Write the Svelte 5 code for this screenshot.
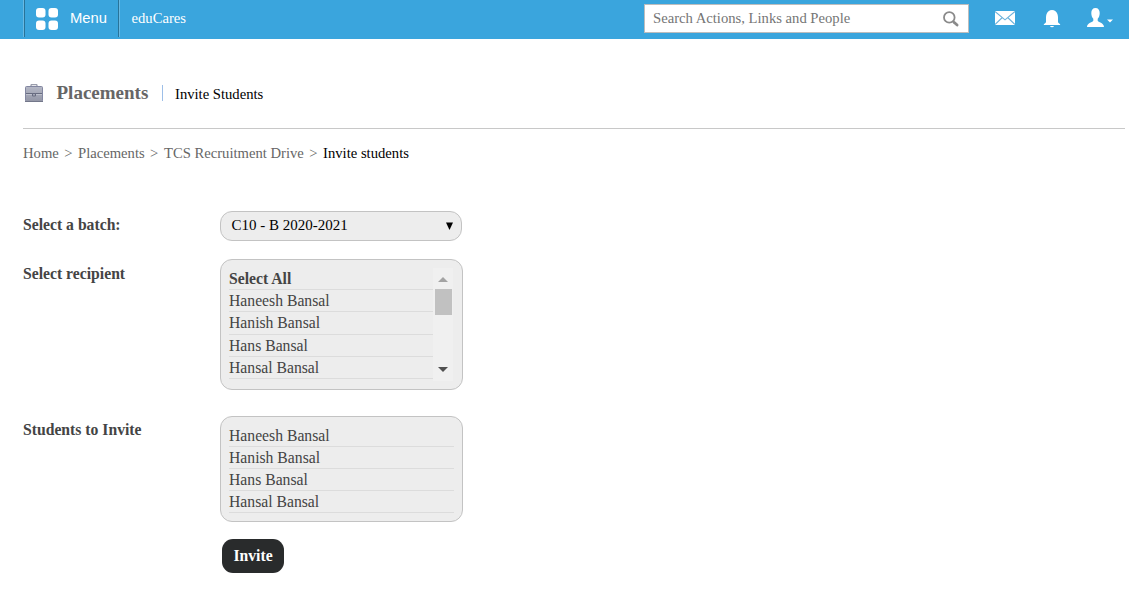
<script>
  const students = ['Haneesh Bansal', 'Hanish Bansal', 'Hans Bansal', 'Hansal Bansal'];
  const crumbs = ['Home', 'Placements', 'TCS Recruitment Drive'];
</script>

<div class="page">
  <header>
    <div class="menu">
      <svg width="23" height="23" viewBox="0 0 23 23" fill="#fff">
        <rect width="9.500" height="9.500" rx="3" /><rect x="12.5" width="9.500" height="9.500" rx="3" />
        <rect y="12.5" width="9.500" height="9.500" rx="3" /><rect x="12.5" y="12.5" width="9.500" height="9.500" rx="3" />
      </svg>
      <span>Menu</span>
    </div>
    <span class="brand">eduCares</span>
    <div class="search">
      <span>Search Actions, Links and People</span>
      <svg width="18" height="18" viewBox="0 0 18 18" fill="none" stroke="#8a8a8a">
        <circle cx="7.3" cy="6.4" r="5.3" stroke-width="1.8" />
        <path d="M11 10.500l1.500 1.500" stroke-width="1.800" />
        <path d="M12.300 11.500l2.800 2.500" stroke-width="2.800" stroke-linecap="round" />
      </svg>
    </div>
    <svg class="mail" width="20" height="14" viewBox="0 0 20 14">
      <rect width="20" height="14" fill="#fff" />
      <path d="M0 .5l10 8.3L20 .5M0 13.5l7.3-7M20 13.5l-7.3-7" fill="none" stroke="#6bb2db" stroke-width="1.1" />
    </svg>
    <svg class="bell" width="18" height="18" viewBox="0 0 18 18" fill="#fff">
      <path d="M5.500 1.300Q7 0 9 0t3.500 1.300C14.300 2.800 15 5 15 7.500V12c0 1.200 2.300 1.500 2.300 3H.7c0-1.500 2.300-1.800 2.300-3V7.500c0-2.500.7-4.700 2.500-6.200z" />
      <path d="M7 16h4q-.4 1.300-2 1.300T7 16z" />
    </svg>
    <svg class="user" width="27" height="20" viewBox="0 0 27 20" fill="#fff">
      <path d="M8.500 0C11.300 0 12.700 2 12.700 5c0 2.500-.8 4.600-2 5.800v2c.3 1.500 6.300 2 6.300 6.200H0c0-4.200 6-4.700 6.300-6.200v-2c-1.200-1.200-2-3.300-2-5.800 0-3 1.400-5 4.200-5z" />
      <path d="M20 11.500h6l-3 3z" />
    </svg>
  </header>

  <main>
    <div class="title">
      <svg width="20" height="19" viewBox="0 0 20 19">
        <defs>
          <linearGradient id="case" x1="0" y1="0" x2="0" y2="1">
            <stop offset="0" stop-color="#b5b8c6" /><stop offset="1" stop-color="#9396a6" />
          </linearGradient>
        </defs>
        <path d="M6 3V1.500q0-1 1-1h4q1 0 1 1V3" fill="none" stroke="#9a9dac" stroke-width="1.300" />
        <rect x=".5" y="2.500" width="17" height="15" rx="1" fill="url(#case)" stroke="#8286a0" />
        <path d="M1 9.500h16" stroke="#686c80" /><path d="M1 10.500h16" stroke="#bdc0cc" />
        <path d="M7.500 9.500h3v2.500h-3z" fill="#a5a8b8" stroke="#686c80" />
        <path d="M0 17.500h18" stroke="#73778a" />
      </svg>
      <h1>Placements</h1>
      <i></i>
      <span>Invite Students</span>
    </div>
    <nav>
      {#each crumbs as crumb}<a>{crumb}</a><b>&gt;</b>{/each}<span>Invite students</span>
    </nav>

    <div class="form">
      <div class="row batch">
        <label>Select a batch:</label>
        <div class="select">
          <span>C10 - B 2020-2021</span>
          <svg width="7" height="8" viewBox="0 0 7 8"><path d="M0 .5h7L3.500 8z" /></svg>
        </div>
      </div>
      <div class="row recipient">
        <label>Select recipient</label>
        <div class="box scrolling">
          <ul>
            <li class="all">Select All</li>
            {#each students as name}<li>{name}</li>{/each}
          </ul>
          <div class="track">
            <svg width="10" height="5" viewBox="0 0 10 5"><path d="M0 5l5-5 5 5z" fill="#a3a3a3" /></svg>
            <div class="thumb"></div>
            <svg class="down" width="10" height="5" viewBox="0 0 10 5"><path d="M0 0h10L5 5z" fill="#505050" /></svg>
          </div>
        </div>
      </div>
      <div class="row invited">
        <label>Students to Invite</label>
        <div class="box">
          <ul>{#each students as name}<li>{name}</li>{/each}</ul>
        </div>
      </div>
      <button>Invite</button>
    </div>
  </main>
</div>

<style>
  :global(body) { margin: 0; background: #fff; overflow: hidden; }
  .page { width: 1129px; height: 606px; overflow: hidden; font: 14.65px/18px "Liberation Serif", serif; color: #444; }
  .page * { box-sizing: border-box; }
  svg { display: block; flex: none; }
  header { height: 39px; background: #3aa5dd; display: flex; align-items: flex-start; color: #fff; }
  .menu { height: 37px; width: 96px; margin-left: 23px; border-left: 1px solid #67b9e4; border-right: 1px solid #287399; box-shadow: inset 1px 0 #287399, 1px 0 #67b9e4; padding: 8px 0 0 12px; display: flex; font-family: "Liberation Sans", sans-serif; font-size: 14.8px; }
  .menu span { margin: 1px 0 0 11px; }
  .brand { margin: 9px 0 0 12.500px; width: 512.500px; }
  .search { width: 325px; height: 29px; margin-top: 4px; background: #fff; border: 1px solid #bdbdbd; display: flex; justify-content: space-between; padding: 4px 8px 0; color: #757575; }
  .search svg { margin-top: 2px; }
  .mail { margin: 11px 0 0 26px; }
  .bell { margin: 10px 0 0 28px; }
  .user { margin: 8px 0 0 26px; }
  main { padding: 0 4px 0 23px; }
  .title { height: 90px; border-bottom: 1px solid #c8c8c8; display: flex; padding-top: 45px; color: #000; }
  .title svg { margin: 0 0 0 2px; }
  h1 { margin: 0 0 0 11.500px; width: 92.500px; font-size: 19px; line-height: 18px; color: #666; white-space: nowrap; }
  .title i { width: 1px; height: 16px; background: #9dbfe8; margin: 1px 12px 0 13px; }
  .title span { margin-top: 1px; }
  nav { display: flex; margin-top: 15px; color: #666; }
  nav b { font-weight: normal; margin: 0 5.6px 0 5.400px; }
  nav span { color: #000; }
  .form { margin-top: 49px; font-size: 15.7px; }
  .row { display: flex; align-items: flex-start; }
  label { width: 197px; font-weight: bold; padding-top: 5px; }
  .select { width: 242px; height: 30px; border: 1px solid #c3c3c3; border-radius: 12px; background: #ededed; color: #000; font-size: 15px; display: flex; justify-content: space-between; padding: 4px 8px 0 10.5px; }
  .select svg { margin-top: 6px; }
  .recipient { margin-top: 18px; }
  .recipient label { padding-top: 6px; }
  .box { width: 243px; height: 106px; background: #ededed; border: 1px solid #c3c3c3; border-radius: 12px; padding: 8px; }
  .scrolling { height: 131px; display: flex; padding-right: 9px; }
  ul { list-style: none; margin: 0; padding: 0; flex: 1; }
  li { height: 22px; line-height: 22px; border-bottom: 1px solid #dcdcdc; }
  .scrolling li { height: 22.2px; }
  li.all { font-weight: bold; }
  .track { width: 20px; height: 113px; background: #f0f0f0; display: flex; flex-direction: column; align-items: center; padding-top: 9px; }
  .thumb { width: 17px; height: 26px; background: #c1c1c1; margin-top: 7px; }
  .down { margin-top: 52px; }
  .invited { margin-top: 26px; }
  button { display: block; margin: 17px 0 0 199px; width: 62px; height: 34px; border: 0; border-radius: 11px; background: #292b2c; color: #fff; font: bold 15.7px/34px "Liberation Serif", serif; padding: 0; }
</style>
